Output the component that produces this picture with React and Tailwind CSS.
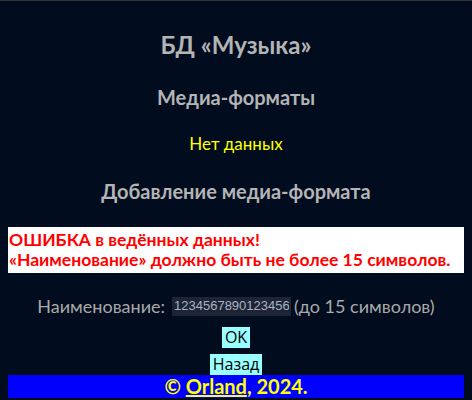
import React from 'react';

const App = () => {
  return (
    <div className="min-h-[400px] bg-[#010c1f] border-t border-[#333333] px-2 text-center font-['Lato','Open_Sans',sans-serif]">
      {/* Заголовки */}
      <h1 className="pt-[29px] text-[24px] leading-[30px] font-bold text-[#b4b4b4]">БД «Музыка»</h1>
      <h2 className="mt-[25px] text-[20px] leading-[24px] font-bold text-[#b4b4b4]">Медиа-форматы</h2>
      <p className="mt-[25px] text-[17px] leading-[20px] text-[#ffff00]">Нет данных</p>
      <h2 className="mt-[25px] text-[20px] leading-[24px] font-bold text-[#b4b4b4]">Добавление медиа-формата</h2>

      {/* Ошибка */}
      <div className="mt-[24px] h-[46px] bg-white pt-[3px] pl-px text-left text-[17.5px] leading-[20px] font-bold text-[#ff0000]">
        <div>ОШИБКА в ведённых данных!</div>
        <div>«Наименование» должно быть не более 15 символов.</div>
      </div>

      {/* Форма */}
      <div className="mt-[23px] flex items-center justify-center text-[18px] leading-[20px] text-[#a9a9a9]">
        <span>Наименование:</span>
        <input
          type="text"
          readOnly
          value="1234567890123456"
          className="ml-[7px] mr-[3px] w-[119px] h-[19px] bg-[#1d2436] px-[2px] text-[13px] text-[#aab3c2] font-['Liberation_Sans',sans-serif] outline-none"
        />
        <span>(до 15 символов)</span>
      </div>
      <div className="flex flex-col items-center">
        <button className="mt-[11px] flex h-[21px] items-center bg-[#99ffff] px-[3px] text-[16px] leading-[21px] text-black font-['Open_Sans',sans-serif]">OK</button>
        <button className="mt-[6px] flex h-[21px] items-center bg-[#99ffff] px-[3px] text-[16px] leading-[21px] text-black font-['Open_Sans',sans-serif]">Назад</button>
      </div>

      {/* Подвал */}
      <div className="bg-[#0000ff] h-[23px] text-[20px] leading-[23px] font-bold text-[#ffff00]">
        © <a href="#" className="underline">Orland</a>, 2024.
      </div>
    </div>
  );
};

export default App;
